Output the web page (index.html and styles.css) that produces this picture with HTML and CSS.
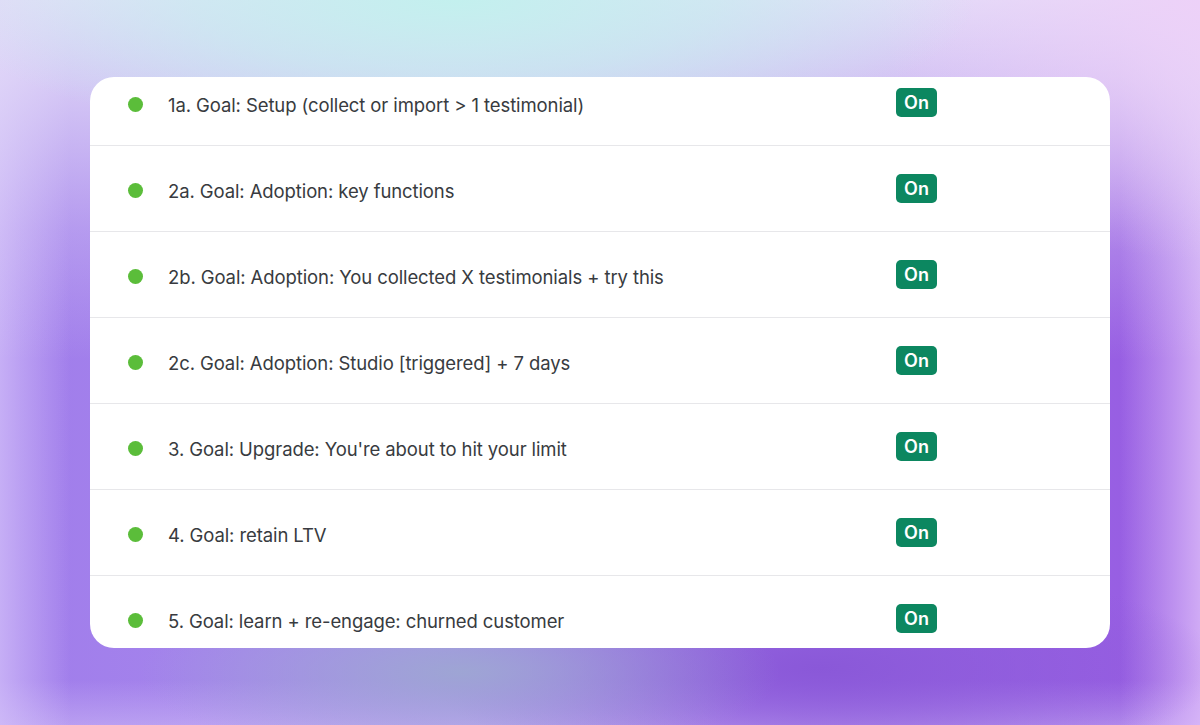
FILE: index.html
```html
<!DOCTYPE html>
<html lang="en">
<head>
    <meta charset="UTF-8">
    <meta name="viewport" content="width=device-width, initial-scale=1.0">
    <title>Goals</title>
    <link rel="stylesheet" href="styles.css">
</head>
<body>
    <main class="stage">
        <section class="card">
            <ul class="goals">
                <li class="goal"><span class="dot"></span><span class="goal-name">1a. Goal: Setup (collect or import &gt; 1 testimonial)</span><span class="badge">On</span></li>
                <li class="goal"><span class="dot"></span><span class="goal-name">2a. Goal: Adoption: key functions</span><span class="badge">On</span></li>
                <li class="goal"><span class="dot"></span><span class="goal-name">2b. Goal: Adoption: You collected X testimonials + try this</span><span class="badge">On</span></li>
                <li class="goal"><span class="dot"></span><span class="goal-name">2c. Goal: Adoption: Studio [triggered] + 7 days</span><span class="badge">On</span></li>
                <li class="goal"><span class="dot"></span><span class="goal-name">3. Goal: Upgrade: You're about to hit your limit</span><span class="badge">On</span></li>
                <li class="goal"><span class="dot"></span><span class="goal-name">4. Goal: retain LTV</span><span class="badge">On</span></li>
                <li class="goal"><span class="dot"></span><span class="goal-name">5. Goal: learn + re-engage: churned customer</span><span class="badge">On</span></li>
            </ul>
        </section>
    </main>
</body>
</html>
```

FILE: styles.css
```css
html, body {
    margin: 0;
    padding: 0;
}

body {
    font-family: 'Inter', 'Noto Sans', sans-serif;
    color: #383b40;
    width: 1200px;
    height: 725px;
    overflow: hidden;
    background-color: #a47cec;
    background-image:
        radial-gradient(ellipse 520px 150px at 38% 0%, #c3f0ee 0%, rgba(195,240,238,0.6) 50%, rgba(195,240,238,0) 100%),
        radial-gradient(ellipse 320px 260px at 100% 0%, rgba(238,208,248,0.9) 0%, rgba(238,208,248,0) 100%),
        radial-gradient(ellipse 320px 90px at 460px 672px, #9ea5d4 0%, rgba(158,165,212,0) 100%),
        radial-gradient(ellipse 400px 110px at 820px 668px, #8a58d8 0%, rgba(138,88,216,0) 100%),
        linear-gradient(180deg, #e3dbf8 0px, rgba(227,219,248,0.8) 80px, rgba(227,219,248,0.3) 230px, rgba(227,219,248,0) 360px),
        linear-gradient(90deg, rgba(214,196,250,0.7) 0px, rgba(214,196,250,0) 70px, rgba(214,196,250,0) 1120px, rgba(222,190,250,0.8) 1200px),
        linear-gradient(0deg, rgba(214,196,248,0.45) 0px, rgba(214,196,248,0) 45px),
        linear-gradient(90deg, #a07ceb 0%, #a98ded 38%, #9a6ae6 68%, #975ce2 100%);
}

.stage {
    padding: 77px 90px 0;
}

.card {
    background-color: #fff;
    border-radius: 24px;
    height: 571px;
    overflow: hidden;
}

.goals {
    list-style: none;
    margin: -17px 0 0;
    padding: 0;
}

.goal {
    box-sizing: border-box;
    display: flex;
    align-items: center;
    height: 86px;
    padding: 4px 0 0 38px;
    border-bottom: 1px solid #e7e7ea;
}

.dot {
    width: 15px;
    height: 15px;
    border-radius: 50%;
    background-color: #5bbd3a;
    margin-right: 25px;
    flex-shrink: 0;
}

.goal-name {
    width: 728px;
    font-size: 18.5px;
    letter-spacing: -0.1px;
}

.badge {
    background-color: #0c8760;
    color: #fff;
    font-weight: 600;
    font-size: 18px;
    border-radius: 5px;
    width: 41px;
    height: 29px;
    line-height: 29px;
    text-align: center;
    margin-top: -5px;
}
```
